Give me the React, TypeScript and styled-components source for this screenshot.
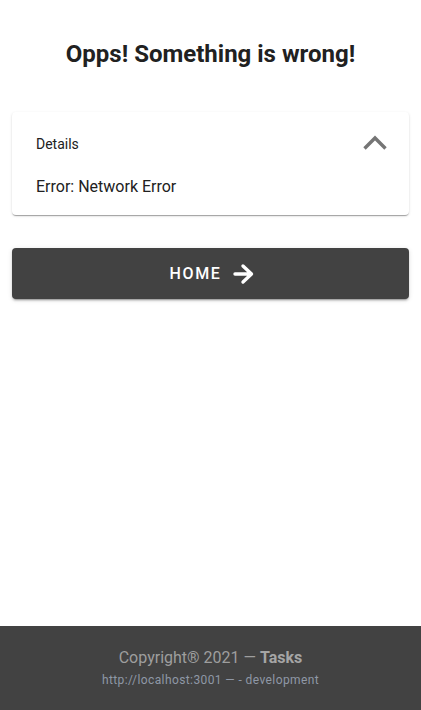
import React from "react";
import styled, { createGlobalStyle } from "styled-components";

const Global = createGlobalStyle`
  html, body { margin: 0; padding: 0; height: 100%; }
  body { font-family: Roboto, "Liberation Sans", sans-serif; background: #fff; color: rgba(0,0,0,0.87); }
  #root { min-height: 100%; }
`;

const Page = styled.div`
  min-height: 710px;
  display: flex;
  flex-direction: column;
`;

const Main = styled.main`
  flex: 1;
  padding: 0 12px;
  display: flex;
  flex-direction: column;
`;

const Title = styled.h1`
  margin: 40px 0 0;
  height: 29px;
  font-size: 24px;
  font-weight: 700;
  line-height: 29px;
  text-align: center;
  color: #212121;
`;

const Card = styled.section`
  margin-top: 43px;
  background: #fff;
  border-radius: 4px;
  box-shadow: 0px 2px 1px -1px rgba(0,0,0,0.2), 0px 1px 1px 0px rgba(0,0,0,0.14), 0px 1px 3px 0px rgba(0,0,0,0.12);
  padding: 0 24px;
`;

const Summary = styled.div`
  display: flex;
  align-items: center;
  justify-content: space-between;
  height: 64px;
`;

const SummaryLabel = styled.span`
  font-size: 14px;
  color: #212121;
`;

const ChevronIcon = styled.svg`
  margin-right: -6px;
`;

const Body = styled.div`
  font-size: 16px;
  line-height: 24px;
  color: #212121;
  padding: 0 0 16px;
  margin-top: -1px;
`;

const Button = styled.button`
  margin-top: 33px;
  height: 51px;
  border: 0;
  border-radius: 4px;
  background: #424242;
  color: #fff;
  display: flex;
  align-items: center;
  justify-content: center;
  gap: 10px;
  font-family: Roboto, "Liberation Sans", sans-serif;
  font-size: 16px;
  font-weight: 500;
  letter-spacing: 1.7px;
  text-transform: uppercase;
  box-shadow: 0px 3px 1px -2px rgba(0,0,0,0.2), 0px 2px 2px 0px rgba(0,0,0,0.14), 0px 1px 5px 0px rgba(0,0,0,0.12);
  padding: 0 0 0 4px;
`;

const Footer = styled.footer`
  background: #424242;
  height: 84px;
  display: flex;
  flex-direction: column;
  align-items: center;
  padding-top: 21px;
  box-sizing: border-box;
`;

const Copy = styled.div`
  font-size: 16px;
  line-height: 22px;
  color: #9e9e9e;
  b { font-weight: 700; color: #a5a5a5; }
`;

const Url = styled.div`
  margin-top: 2px;
  font-size: 12px;
  line-height: 18px;
  letter-spacing: 0.4px;
  color: #8f98a6;
`;

export default function App() {
  return (
    <Page>
      <Global />
      <Main>
        <Title>Opps! Something is wrong!</Title>
        <Card>
          <Summary>
            <SummaryLabel>Details</SummaryLabel>
            <ChevronIcon width="32" height="32" viewBox="0 0 32 32">
              <path d="M5.5 20.5L16 10l10.5 10.5" fill="none" stroke="#757575" strokeWidth="3.4" />
            </ChevronIcon>
          </Summary>
          <Body>Error: Network Error</Body>
        </Card>
        <Button>
          HOME
          <svg width="24" height="24" viewBox="0 0 24 24">
            <path d="M3 12h16.5M11 4l8.5 8-8.5 8" fill="none" stroke="#fff" strokeWidth="3.4" strokeLinecap="round" strokeLinejoin="round" />
          </svg>
        </Button>
      </Main>
      <Footer>
        <Copy>Copyright® 2021 — <b>Tasks</b></Copy>
        <Url>http://localhost:3001 — - development</Url>
      </Footer>
    </Page>
  );
}
